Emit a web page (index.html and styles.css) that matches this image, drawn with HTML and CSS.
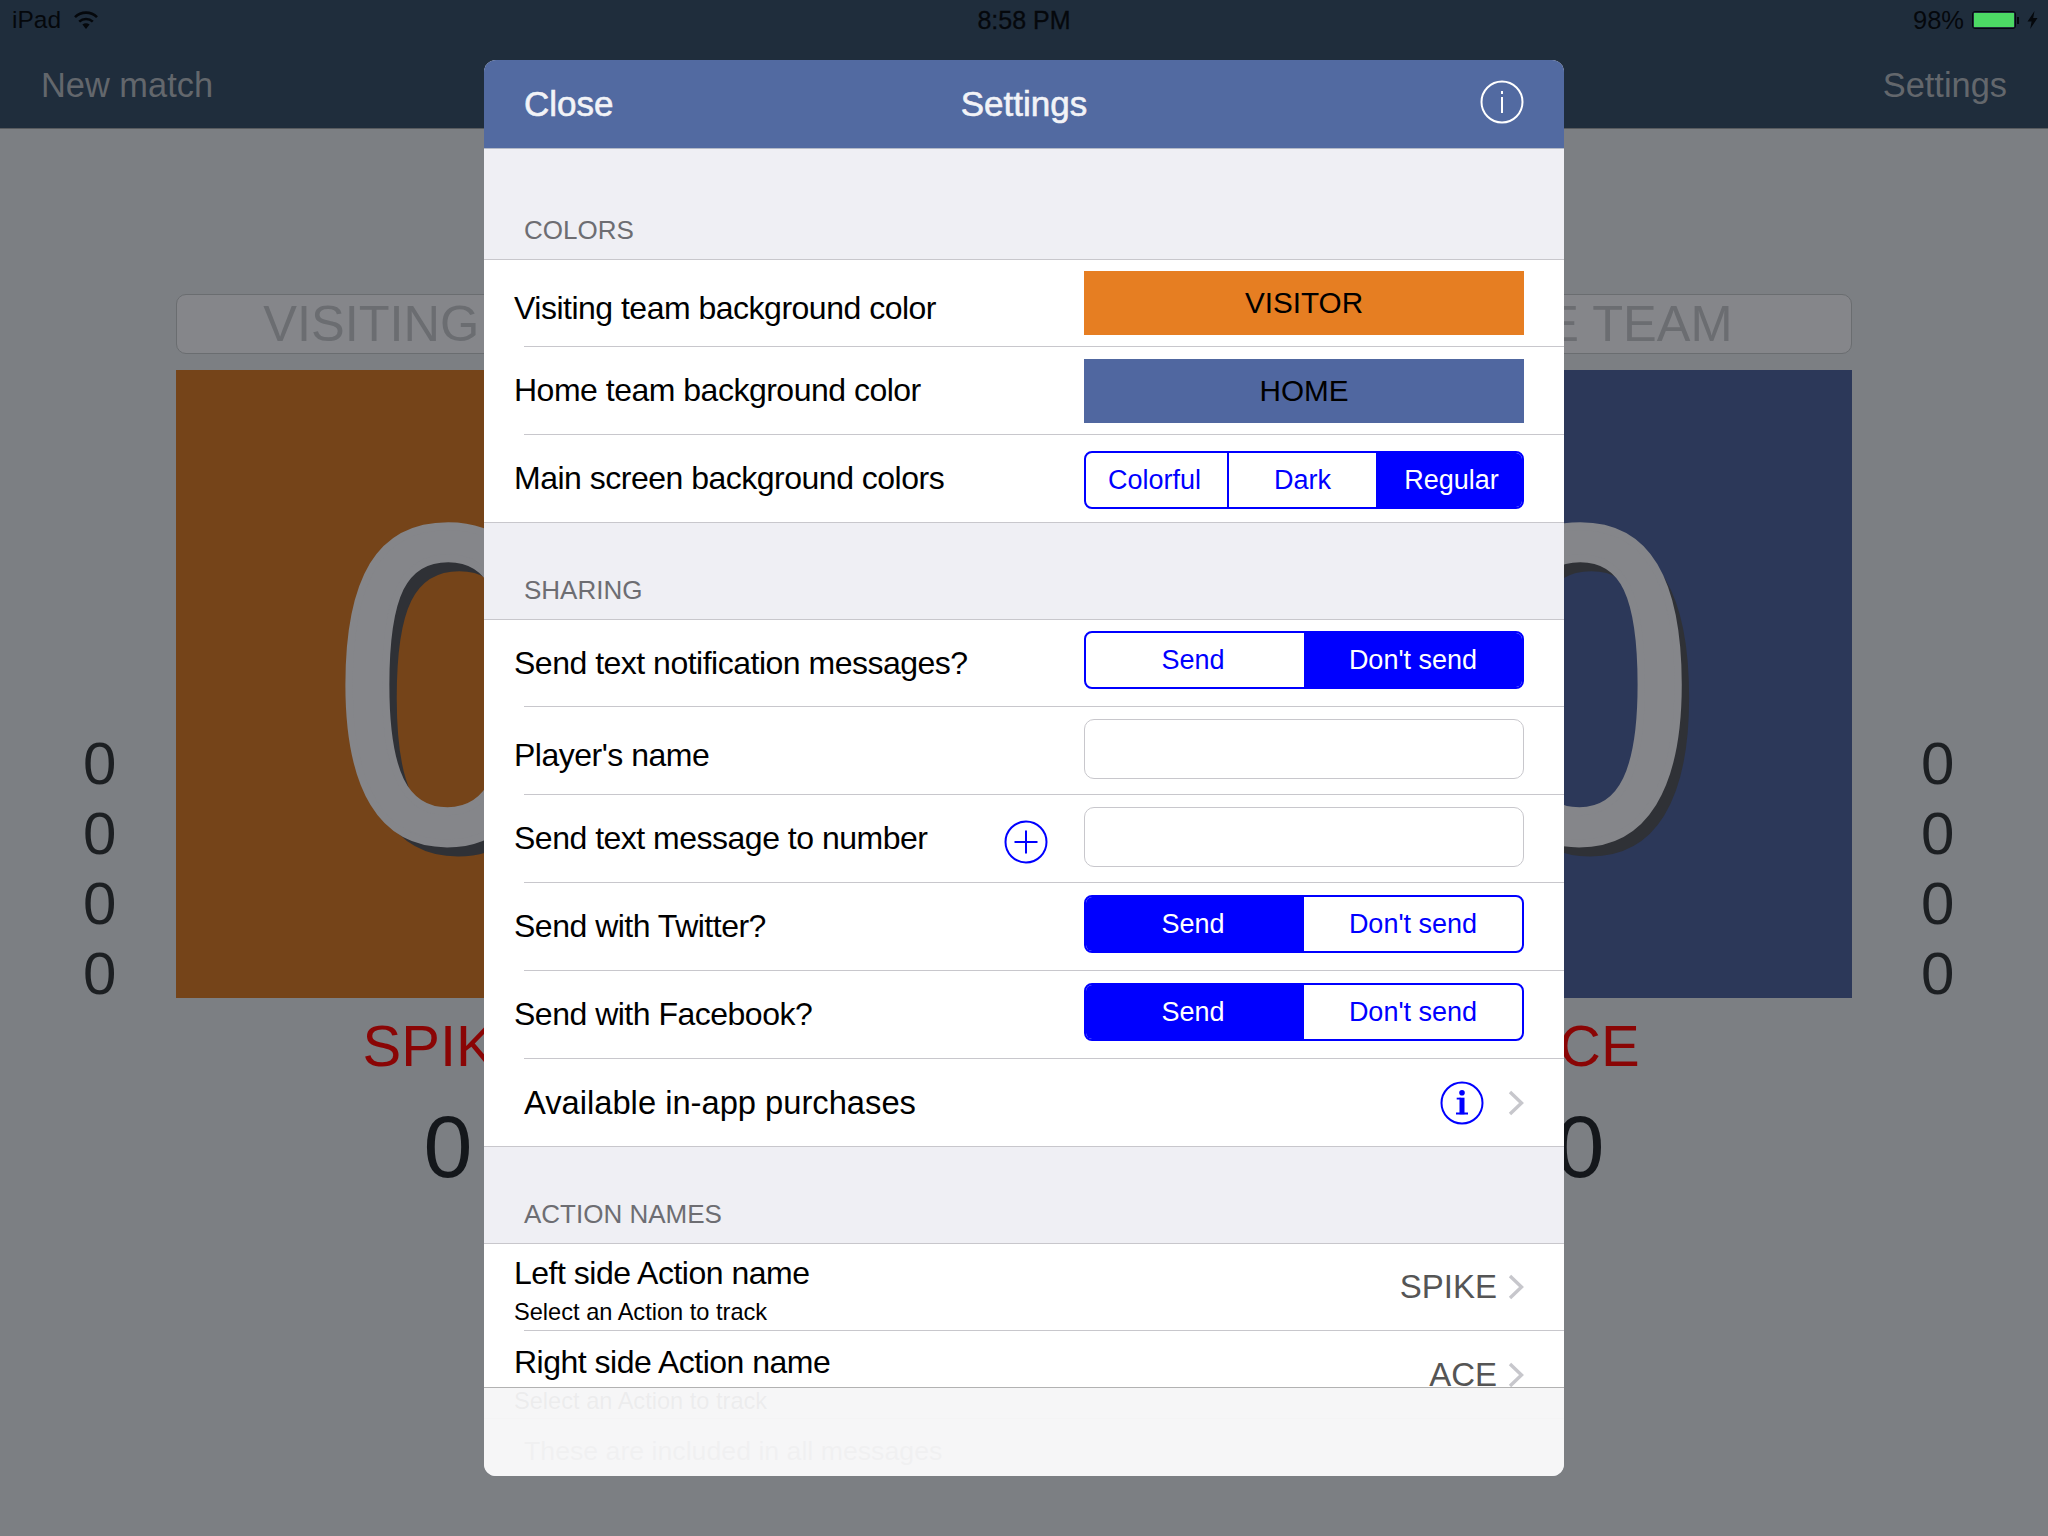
FILE: index.html
```html
<!DOCTYPE html>
<html lang="en">
<head>
    <meta charset="UTF-8">
    <meta name="viewport" content="width=device-width, initial-scale=1.0">
    <title>Settings</title>
    <link rel="stylesheet" href="styles.css">
</head>
<body>

<div class="topbar">
    <div class="status">
        <div class="status-left">
            <span>iPad</span>
            <svg class="wifi" width="24" height="18" viewBox="0 0 24 18">
                <path d="M12 18 L8.4 13.6 A6 6 0 0 1 15.6 13.6 Z" fill="#05080c"/>
                <path d="M5.2 10.6 A10 10 0 0 1 18.8 10.6" fill="none" stroke="#05080c" stroke-width="2.6"/>
                <path d="M1 6.2 A15.6 15.6 0 0 1 23 6.2" fill="none" stroke="#05080c" stroke-width="2.6"/>
            </svg>
        </div>
        <div class="status-time">8:58 PM</div>
        <div class="status-right">
            <span>98%</span>
            <span class="battery"><span class="battery-fill"></span></span>
            <span class="battery-nub"></span>
            <svg class="bolt" width="11" height="18" viewBox="0 0 11 18">
                <path d="M7.5 0 L0.5 10.5 H4.6 L3.2 18 L10.5 7 H6.2 Z" fill="#05080c"/>
            </svg>
        </div>
    </div>
    <div class="nav">
        <span>New match</span>
        <span>Settings</span>
    </div>
</div>

<div class="board">
    <div class="team-name name-left">VISITING TEAM</div>
    <div class="team-name name-right">HOME TEAM</div>

    <div class="side side-left">0<br>0<br>0<br>0</div>
    <div class="score score-left"><span>0</span></div>
    <div class="score score-right"><span>0</span></div>
    <div class="side side-right">0<br>0<br>0<br>0</div>

    <div class="action action-left">
        <div class="action-name">SPIKE</div>
        <div class="action-count">0</div>
    </div>
    <div class="action action-right">
        <div class="action-name">ACE</div>
        <div class="action-count">0</div>
    </div>
</div>

<div class="modal">
    <div class="modal-head">
        <span class="modal-close">Close</span>
        <span class="modal-title">Settings</span>
        <svg width="44" height="44" viewBox="0 0 44 44">
            <circle cx="22" cy="22" r="20.5" fill="none" stroke="#fff" stroke-width="2"/>
            <rect x="21" y="11" width="2" height="3" fill="#fff"/>
            <rect x="21" y="17" width="2" height="16" fill="#fff"/>
        </svg>
    </div>

    <div class="table">
        <div class="section-title first">COLORS</div>
        <div class="group">
            <div class="row row-low">
                <span class="label">Visiting team background color</span>
                <div class="swatch swatch-orange">VISITOR</div>
            </div>
            <div class="sep"></div>
            <div class="row">
                <span class="label">Home team background color</span>
                <div class="swatch swatch-blue">HOME</div>
            </div>
            <div class="sep"></div>
            <div class="row">
                <span class="label">Main screen background colors</span>
                <div class="segment segment-three">
                    <span class="divided">Colorful</span>
                    <span>Dark</span>
                    <span class="on">Regular</span>
                </div>
            </div>
        </div>

        <div class="section-title">SHARING</div>
        <div class="group">
            <div class="row">
                <span class="label">Send text notification messages?</span>
                <div class="segment">
                    <span>Send</span>
                    <span class="on">Don't send</span>
                </div>
            </div>
            <div class="sep"></div>
            <div class="row row-low">
                <span class="label">Player's name</span>
                <input class="field" type="text">
            </div>
            <div class="sep"></div>
            <div class="row">
                <span class="label">Send text message to number</span>
                <svg class="plus" width="44" height="44" viewBox="0 0 44 44">
                    <circle cx="22" cy="22" r="20.5" fill="none" stroke="#0000ff" stroke-width="2"/>
                    <path d="M10.5 22 H33.5 M22 10.5 V33.5" fill="none" stroke="#0000ff" stroke-width="2"/>
                </svg>
                <input class="field" type="text">
            </div>
            <div class="sep"></div>
            <div class="row">
                <span class="label">Send with Twitter?</span>
                <div class="segment">
                    <span class="on">Send</span>
                    <span>Don't send</span>
                </div>
            </div>
            <div class="sep"></div>
            <div class="row">
                <span class="label">Send with Facebook?</span>
                <div class="segment">
                    <span class="on">Send</span>
                    <span>Don't send</span>
                </div>
            </div>
            <div class="sep"></div>
            <div class="row row-wide">
                <span class="label">Available in-app purchases</span>
                <svg class="info" width="44" height="44" viewBox="0 0 44 44">
                    <circle cx="22" cy="22" r="20.5" fill="none" stroke="#0000ff" stroke-width="2"/>
                    <circle cx="22" cy="11.7" r="2.8" fill="#0000ff"/>
                    <rect x="19.5" y="16.7" width="5" height="16.6" fill="#0000ff"/>
                    <rect x="16.7" y="16.7" width="4" height="1.8" fill="#0000ff"/>
                    <rect x="16" y="31.5" width="12" height="2" fill="#0000ff"/>
                </svg>
                <svg class="chevron" width="16" height="26" viewBox="0 0 16 26">
                    <path d="M2 2 L13.5 13 L2 24" fill="none" stroke="#c7c7cc" stroke-width="3.4"/>
                </svg>
            </div>
        </div>

        <div class="section-title">ACTION NAMES</div>
        <div class="group">
            <div class="row">
                <div class="label-stack">
                    <div class="label">Left side Action name</div>
                    <div class="sublabel">Select an Action to track</div>
                </div>
                <span class="value">SPIKE</span>
                <svg class="chevron" width="16" height="26" viewBox="0 0 16 26">
                    <path d="M2 2 L13.5 13 L2 24" fill="none" stroke="#c7c7cc" stroke-width="3.4"/>
                </svg>
            </div>
            <div class="sep"></div>
            <div class="row">
                <div class="label-stack stack-low">
                    <div class="label">Right side Action name</div>
                    <div class="sublabel">Select an Action to track</div>
                </div>
                <span class="value">ACE</span>
                <svg class="chevron" width="16" height="26" viewBox="0 0 16 26">
                    <path d="M2 2 L13.5 13 L2 24" fill="none" stroke="#c7c7cc" stroke-width="3.4"/>
                </svg>
            </div>
        </div>

        <div class="section-note">These are included in all messages</div>
    </div>

    <div class="toolbar"></div>
</div>

</body>
</html>
```

FILE: styles.css
```css
* {
    box-sizing: border-box;
}

body {
    font-family: "Liberation Sans", Arial, sans-serif;
    background-color: #7c7f83;
    margin: 0;
    width: 2048px;
    height: 1536px;
    overflow: hidden;
    position: relative;
}

/* top bar behind the dialog */
.topbar {
    height: 129px;
    background-color: #1f2d3c;
    border-bottom: 1px solid #585b5f;
}

.status {
    display: grid;
    grid-template-columns: 1fr auto 1fr;
    align-items: center;
    height: 40px;
    padding: 0 10px;
    font-size: 24.5px;
    color: #05080c;
}

.status-left {
    display: flex;
    align-items: center;
    gap: 13px;
    padding-left: 2px;
}

.status-time {
    font-size: 25px;
    -webkit-text-stroke: 0.3px #05080c;
}

.status-right {
    display: flex;
    align-items: center;
    justify-content: flex-end;
    font-size: 25.5px;
}

.battery {
    width: 44px;
    height: 18px;
    margin-left: 8px;
    padding: 1px;
    border: 1.5px solid #05080c;
    border-radius: 3px;
}

.battery-fill {
    display: block;
    width: 100%;
    height: 100%;
    background-color: #4cd964;
}

.battery-nub {
    width: 2px;
    height: 7px;
    margin: 0 8px 0 1px;
    background-color: #05080c;
}

.nav {
    display: flex;
    justify-content: space-between;
    padding: 0 41px;
    margin-top: 6px;
    font-size: 34.4px;
    line-height: 78px;
    color: #63676c;
}

/* scoreboard */
.board {
    display: grid;
    grid-template-columns: 176px 544px 588px 544px 196px;
    grid-template-rows: 60px 628px auto;
    row-gap: 16px;
    padding-top: 165px;
}

.team-name {
    height: 60px;
    background-color: #85868a;
    border: 1px solid #6a6d70;
    border-radius: 10px;
    font-size: 50.5px;
    line-height: 58px;
    text-align: center;
    color: #6b6d71;
}

.name-left {
    grid-column: 2;
    grid-row: 1;
}

.name-right {
    grid-column: 4;
    grid-row: 1;
}

.side {
    grid-row: 2;
    font-size: 60px;
    line-height: 70px;
    color: #1c1f22;
    padding-top: 359px;
}

.side-left {
    grid-column: 1;
    padding-left: 83px;
}

.side-right {
    grid-column: 5;
    padding-left: 69px;
}

.score {
    grid-row: 2;
    display: flex;
    align-items: center;
    justify-content: center;
    font-size: 448px;
    line-height: 1;
    color: #85868a;
    -webkit-text-stroke: 8px #85868a;
    text-shadow: 12px 13px 0 #2f3136;
}

.score span {
    display: block;
    transform: scaleX(0.92);
}

.score-left {
    grid-column: 2;
    background-color: #754419;
}

.score-right {
    grid-column: 4;
    background-color: #2c3859;
}

.action {
    grid-row: 3;
    text-align: center;
}

.action-left {
    grid-column: 2;
}

.action-right {
    grid-column: 4;
}

.action-name {
    font-size: 58px;
    line-height: 64px;
    color: #8a0505;
}

.action-count {
    font-size: 88px;
    line-height: 96px;
    margin-top: 21px;
    color: #14171b;
}

/* settings dialog */
.modal {
    position: absolute;
    left: 484px;
    top: 60px;
    width: 1080px;
    height: 1416px;
    background-color: #efeff4;
    border-radius: 12px;
    overflow: hidden;
}

.modal-head {
    display: flex;
    align-items: center;
    justify-content: space-between;
    height: 89px;
    padding: 0 40px;
    background-color: #526aa1;
    border-bottom: 1px solid #b4bac8;
    color: #f2f3f7;
    position: relative;
}

.modal-close,
.modal-title {
    font-size: 35px;
    -webkit-text-stroke: 0.6px #f2f3f7;
}

.modal-title {
    position: absolute;
    left: 0;
    right: 0;
    text-align: center;
    pointer-events: none;
}

.modal-head svg {
    margin-top: -4px;
}

.section-title {
    display: flex;
    align-items: flex-end;
    height: 96px;
    padding: 0 0 14px 40px;
    font-size: 26px;
    line-height: 30px;
    color: #6d6d72;
}

.section-title.first {
    height: 110px;
}

.group {
    background-color: #fff;
    border-top: 1px solid #c8c7cc;
    border-bottom: 1px solid #c8c7cc;
}

.row {
    display: flex;
    align-items: center;
    height: 87px;
    padding: 0 40px 0 30px;
}

.group .row:first-child {
    height: 86px;
}

.row-wide {
    padding-left: 40px;
}

.sep {
    height: 1px;
    margin-left: 40px;
    background-color: #c8c7cc;
}

.label {
    font-size: 32px;
    letter-spacing: -0.5px;
    color: #000;
}

.row-wide .label {
    font-size: 32.7px;
    letter-spacing: 0;
}

.row-low .label {
    padding-top: 10px;
}

.label-stack {
    padding-top: 7px;
}

.stack-low {
    padding-top: 10px;
}

.sublabel {
    font-size: 23.6px;
    letter-spacing: 0;
    margin-top: 7px;
    color: #000;
}

.row > .label,
.row > .label-stack {
    margin-right: auto;
}

.swatch {
    width: 440px;
    height: 64px;
    font-size: 29.7px;
    line-height: 64px;
    text-align: center;
    color: #000;
}

.swatch-orange {
    background-color: #e67e22;
}

.swatch-blue {
    background-color: #5067a0;
}

.segment {
    display: flex;
    width: 440px;
    height: 58px;
    margin-top: -6px;
    border: 2px solid #0000ff;
    border-radius: 8px;
    overflow: hidden;
    font-size: 27px;
    line-height: 54px;
    text-align: center;
    color: #0000ff;
}

.segment span {
    flex: 1;
}

.segment span:first-child {
    text-indent: -4px;
}

.segment .on {
    background-color: #0000ff;
    color: #fff;
}

.segment-three {
    margin-top: 2px;
}

.segment-three .divided {
    flex: none;
    width: 143px;
    text-indent: 0;
    border-right: 2px solid #0000ff;
}

.segment-three span:nth-child(2) {
    flex: none;
    width: 147px;
}

.segment-three .on {
    padding-left: 5px;
}

.field {
    width: 440px;
    height: 60px;
    margin: -4px 0 0;
    padding: 0 10px;
    background-color: #fff;
    border: 1px solid #c8c7cc;
    border-radius: 10px;
}

.plus {
    margin-right: 36px;
    margin-top: 6px;
}

.info {
    margin-right: 24px;
}

.value {
    font-size: 33px;
    color: #555;
    margin-right: 11px;
}

.chevron {
    display: block;
}

.section-note {
    padding: 17px 0 0 40px;
    font-size: 26.7px;
    color: #6d6d72;
}

/* see-through bar at the bottom of the dialog */
.toolbar {
    position: absolute;
    left: 0;
    right: 0;
    bottom: 0;
    height: 89px;
    background-color: rgba(246, 246, 247, 0.96);
    border-top: 1px solid #b2b2b2;
}
```
